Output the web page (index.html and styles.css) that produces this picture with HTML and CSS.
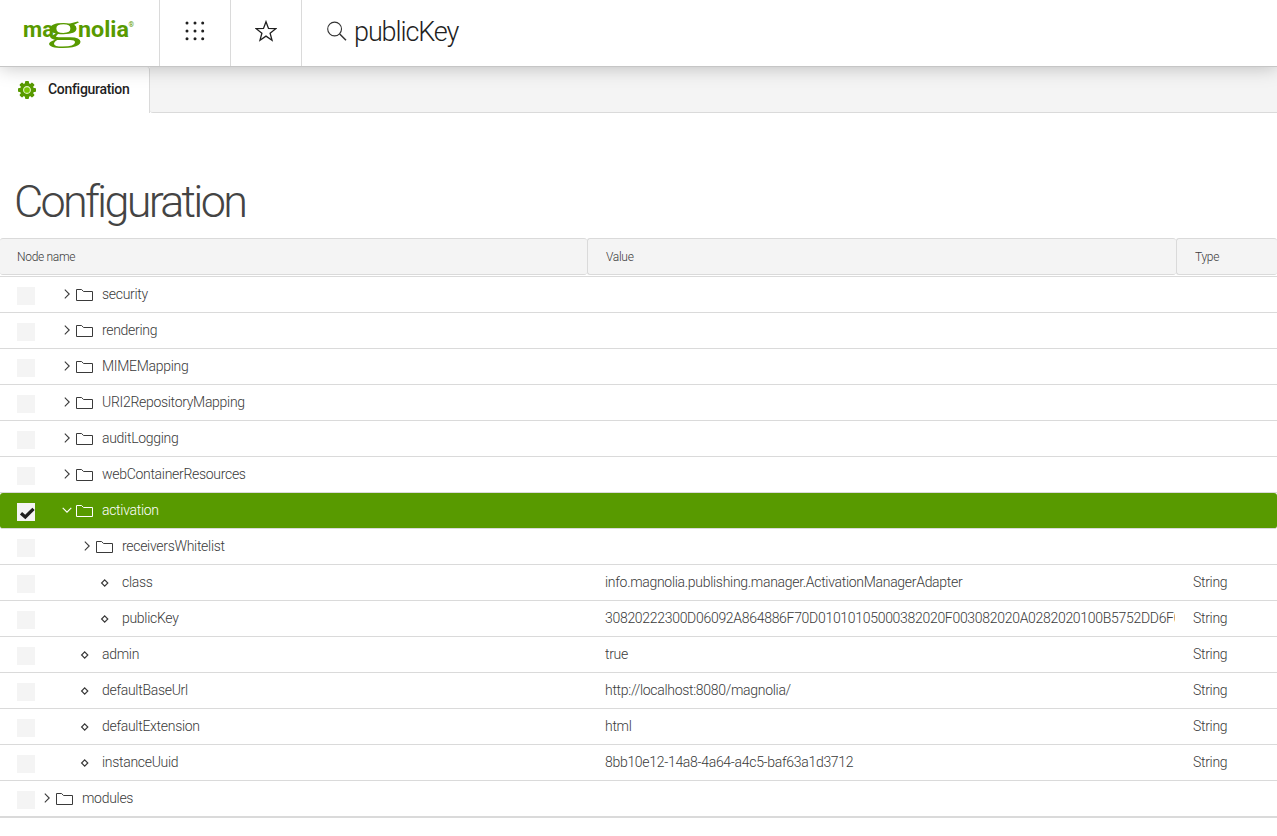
FILE: index.html
```
<!DOCTYPE html>
<html lang="en">
<head>
<meta charset="utf-8">
<title>Configuration</title>
<link rel="stylesheet" href="styles.css">
</head>
<body>
<svg class="defs" aria-hidden="true">
  <symbol id="folder" viewBox="0 0 18 14"><path d="M.5 12.5V1.5H5.6L7.5 3.5H16.5V12.5Z" fill="none" stroke="currentColor"/></symbol>
  <symbol id="right" viewBox="0 0 10 10"><path d="M2.8 .7L7.2 5L2.8 9.3" fill="none" stroke="currentColor" stroke-width="1.1"/></symbol>
  <symbol id="down" viewBox="0 0 10 10"><path d="M.7 2.8L5 7.2L9.3 2.8" fill="none" stroke="currentColor" stroke-width="1.1"/></symbol>
  <symbol id="prop" viewBox="0 0 18 14"><path d="M8.7 3.9L11.8 7L8.7 10.1L5.6 7Z" fill="none" stroke="currentColor" stroke-width="1.2"/></symbol>
</svg>
<header class="topbar">
  <div class="logo">
    <svg width="112" height="32" viewBox="0 0 112 32">
      <g fill="#589a00" font-family="Roboto, sans-serif" font-weight="700">
        <text x="0" y="21" font-size="22.5" textLength="31" lengthAdjust="spacingAndGlyphs">ma</text>
        <text class="logo-g" transform="translate(23 24) scale(2.05 1)" font-size="35">g</text>
        <text x="55" y="21" font-size="22.5" textLength="51" lengthAdjust="spacingAndGlyphs">nolia</text>
        <text x="105.5" y="11" font-size="7" font-weight="400">®</text>
      </g>
    </svg>
  </div>
  <button class="tool" aria-label="Apps">
    <svg width="20" height="20" viewBox="0 0 20 20" fill="#1f1f1f"><circle cx="2" cy="2" r="1.5"/><circle cx="10" cy="2" r="1.5"/><circle cx="17.7" cy="2" r="1.5"/><circle cx="2" cy="10" r="1.5"/><circle cx="10" cy="10" r="1.5"/><circle cx="17.7" cy="10" r="1.5"/><circle cx="2" cy="17.8" r="1.5"/><circle cx="10" cy="17.8" r="1.5"/><circle cx="17.7" cy="17.8" r="1.5"/></svg>
  </button>
  <button class="tool" aria-label="Favorites">
    <svg width="22" height="22" viewBox="0 0 22 22"><path d="M11 1.7L13.5 8.4L20.8 8.7L15.1 13.2L17 20.2L11 16.1L5 20.2L6.9 13.2L1.2 8.7L8.5 8.4Z" fill="none" stroke="#1f1f1f" stroke-width="1.3"/></svg>
  </button>
  <div class="search">
    <svg width="20" height="21" viewBox="0 0 20 21"><g fill="none" stroke="#333"><circle cx="7.6" cy="8" r="6.9" stroke-width="1.1"/><path d="M12.7 13L19 19.3" stroke-width="1.5"/></g></svg>
    <span>publicKey</span>
  </div>
</header>
<nav class="tabs">
  <div class="tab">
    <svg width="18" height="18" viewBox="-9 -9 18 18">
      <g fill="#589a00"><circle r="7"/><g id="teeth"><rect x="-2" y="-9" width="4" height="18" rx="1"/><rect x="-9" y="-2" width="18" height="4" rx="1"/></g><use href="#teeth" transform="rotate(45)"/></g>
      <circle r="3.4" fill="#78c600" stroke="#e2f3c8" stroke-width="1.1"/>
    </svg>
    <span>Configuration</span>
  </div>
  <div class="tabfill"></div>
</nav>
<main>
  <h1>Configuration</h1>
  <div class="grid head"><div>Node name</div><div>Value</div><div>Type</div></div>
  <div class="rows" id="rows"></div>
</main>
<script src="rows.js"></script>
</body>
</html>
```
FILE: styles.css
```
* { box-sizing: border-box; }
body { margin: 0; background: #fff; color: #3a3a3a; font-family: Roboto, sans-serif; font-weight: 300; height: 836px; overflow: hidden; }
.defs { position: absolute; width: 0; height: 0; }
.topbar { position: relative; z-index: 1; display: flex; height: 67px; background: #fff; border-bottom: 1px solid #c6c6c6; box-shadow: 0 0 18px rgba(0,0,0,.25); clip-path: inset(0 0 -24px 0); }
.logo { width: 160px; border-right: 1px solid #dadada; padding: 16px 0 0 23px; }
.logo svg { display: block; overflow: visible; }
.logo-g { font-family: "Liberation Serif", serif; font-weight: 400; }
.tool { width: 71px; border: 0; border-right: 1px solid #dadada; background: none; padding: 0 0 4px; display: flex; align-items: center; justify-content: center; }
.search { display: flex; align-items: flex-start; padding: 21px 0 0 25px; color: #1f1f1f; font-size: 27px; letter-spacing: -1.1px; line-height: 32px; gap: 7px; }
.search span { margin-top: -5px; }
.tabs { display: flex; height: 46px; }
.tab { width: 150px; border-right: 1px solid #dadada; border-radius: 3px 3px 0 0; display: flex; align-items: center; padding: 0 0 1px 18px; gap: 12px; font-size: 14px; font-weight: 500; letter-spacing: -.3px; color: #1f1f1f; }
.tab span { margin-top: -1px; }
.tabfill { flex: 1; background: #f4f4f4; border-bottom: 1px solid #dadada; border-radius: 0 0 0 3px; }
h1 { margin: 0; height: 125px; padding: 62px 0 0 14px; font-size: 45px; line-height: 54px; font-weight: 300; letter-spacing: -2.75px; color: #444; }
.grid { display: grid; grid-template-columns: 587px 589px 1fr; }
.head { height: 37px; margin-bottom: 1px; font-size: 12px; letter-spacing: -.3px; }
.head > div { background: #f4f4f4; border: 1px solid #dadada; border-right: 0; border-radius: 3px; line-height: 36px; height: 37px; padding-left: 18px; }
.head > div:first-child { border-left: 0; padding-left: 17px; }
.rows { border-top: 1px solid #dadada; border-bottom: 1px solid #dadada; font-size: 14px; letter-spacing: -.3px; }
.row { height: 36px; border-bottom: 1px solid #dadada; line-height: 34px; }
.row > div { white-space: nowrap; overflow: hidden; height: 35px; }
.row .value { padding-left: 18px; }
.row .value span { display: block; overflow: hidden; width: 570px; }
.row .type { padding-left: 17px; }
.name { display: flex; align-items: flex-start; padding-left: 17px; }
.box { width: 18px; height: 18px; margin-top: 10px; background: #f4f4f4; flex: none; }
.box svg { display: block; }
.arrow { width: 10px; height: 10px; margin: 12px 4px 0 0; flex: none; }
.icon { width: 18px; height: 14px; margin: 11px 8px 0 0; flex: none; }
.l0 { margin-left: 7px; }
.l1 { margin-left: 27px; }
.l2 { margin-left: 47px; }
.selected { background: #589a00; color: #fff; border-radius: 3px; }
```
FILE: rows.js
```
const key = '30820222300D06092A864886F70D01010105000382020F003082020A0282020100B5752DD6F0';
const rows = [
  [1, 'security'], [1, 'rendering'], [1, 'MIMEMapping'], [1, 'URI2RepositoryMapping'],
  [1, 'auditLogging'], [1, 'webContainerResources'], [1, 'activation', null, true],
  [2, 'receiversWhitelist'],
  [2, 'class', 'info.magnolia.publishing.manager.ActivationManagerAdapter'],
  [2, 'publicKey', key], [1, 'admin', 'true'],
  [1, 'defaultBaseUrl', 'http://localhost:8080/magnolia/'], [1, 'defaultExtension', 'html'],
  [1, 'instanceUuid', '8bb10e12-14a8-4a64-a4c5-baf63a1d3712'], [0, 'modules']
];
document.getElementById('rows').innerHTML = rows.map(([level, name, value, open]) => {
  const arrow = value ? '' : `<use href="#${open ? 'down' : 'right'}"/>`;
  const check = open ? '<svg width="18" height="18"><path d="M4 10.2L8.3 14L16.5 5.8" fill="none" stroke="#1f1f1f" stroke-width="3.2"/></svg>' : '';
  return `<div class="grid row${open ? ' selected' : ''}">
    <div class="name"><span class="box">${check}</span><svg class="arrow l${level}">${arrow}</svg><svg class="icon"><use href="#${value ? 'prop' : 'folder'}"/></svg><span>${name}</span></div>
    <div class="value"><span>${value || ''}</span></div>
    <div class="type">${value ? 'String' : ''}</div></div>`;
}).join('');
```
